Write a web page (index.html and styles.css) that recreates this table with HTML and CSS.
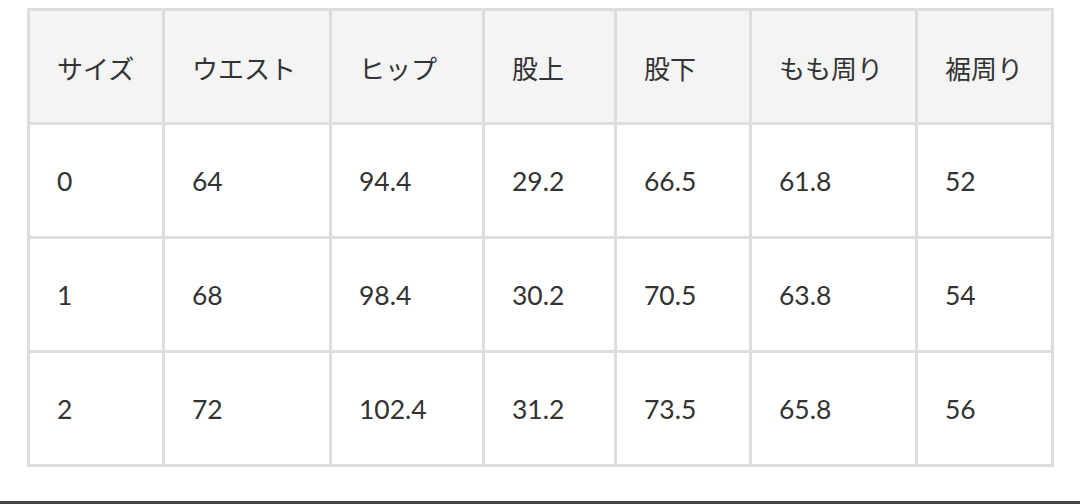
FILE: index.html
```html
<!DOCTYPE html>
<html lang="ja">
<head>
<meta charset="utf-8">
<link rel="stylesheet" href="styles.css">
</head>
<body>
<div class="page">
  <table class="size-table">
    <colgroup>
      <col class="c1"><col class="c2"><col class="c3"><col class="c4"><col class="c5"><col class="c6"><col class="c7">
    </colgroup>
    <thead>
      <tr><th>サイズ</th><th>ウエスト</th><th>ヒップ</th><th>股上</th><th>股下</th><th>もも周り</th><th>裾周り</th></tr>
    </thead>
    <tbody>
      <tr><td>0</td><td>64</td><td>94.4</td><td>29.2</td><td>66.5</td><td>61.8</td><td>52</td></tr>
      <tr><td>1</td><td>68</td><td>98.4</td><td>30.2</td><td>70.5</td><td>63.8</td><td>54</td></tr>
      <tr><td>2</td><td>72</td><td>102.4</td><td>31.2</td><td>73.5</td><td>65.8</td><td>56</td></tr>
    </tbody>
  </table>
  <div class="rule"></div>
</div>
</body>
</html>
```

FILE: styles.css
```css
html, body {
  margin: 0;
  padding: 0;
  background: #ffffff;
}
.page {
  width: 1080px;
  height: 504px;
  padding: 8px 0 0 27px;
  box-sizing: border-box;
  font-family: Lato, "Noto Sans CJK JP", sans-serif;
  color: #333333;
  display: flex;
  flex-direction: column;
}
.size-table {
  border-collapse: separate;
  border-spacing: 0;
  table-layout: fixed;
  width: 1027px;
  border-top: 3px solid #dddddd;
  border-left: 3px solid #dddddd;
}
.c1 { width: 135px; }
.c2 { width: 167px; }
.c3 { width: 153px; }
.c4 { width: 132px; }
.c5 { width: 135px; }
.c6 { width: 166px; }
.c7 { width: 136px; }
.size-table th,
.size-table td {
  box-sizing: border-box;
  height: 114px;
  padding: 2px 0 0 27px;
  border-right: 3px solid #dddddd;
  border-bottom: 3px solid #dddddd;
  text-align: left;
  vertical-align: middle;
  font-size: 26.5px;
  font-weight: normal;
  line-height: 1.3;
}
.size-table th {
  background: #f4f4f4;
  font-family: "Noto Sans CJK JP", sans-serif;
  font-size: 26px;
}
.rule {
  margin-top: auto;
  margin-left: -27px;
  height: 3px;
  background: #444444;
}
```
